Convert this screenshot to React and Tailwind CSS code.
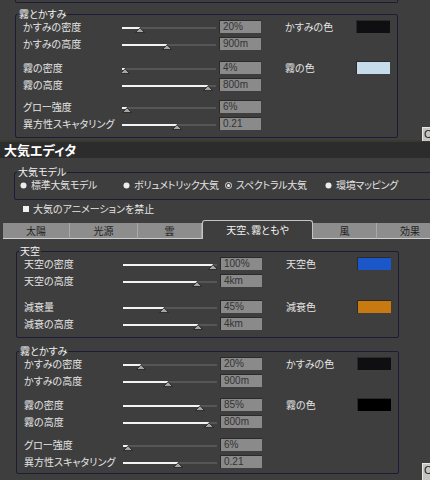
import React from 'react';

const topFog = [
  { label: 'かすみの密度', pos: 18, value: '20%', colorLabel: 'かすみの色', sw: 'bg-[#0f0f12]' },
  { label: 'かすみの高度', pos: 45, value: '900m', mt: 'mt-[4px]' },
  { label: '霧の密度', pos: 3, value: '4%', colorLabel: '霧の色', sw: 'bg-[#c7dcea]', mt: 'mt-[11px]' },
  { label: '霧の高度', pos: 86, value: '800m', mt: 'mt-[4px]' },
  { label: 'グロー強度', pos: 5, value: '6%', mt: 'mt-[9px]' },
  { label: '異方性スキャタリング', pos: 55, value: '0.21', mt: 'mt-[4px]' },
];

const sky = [
  { label: '天空の密度', pos: 90, value: '100%', colorLabel: '天空色', sw: 'bg-[#1b57c9]' },
  { label: '天空の高度', pos: 74, value: '4km', mt: 'mt-[4px]' },
  { label: '減衰量', pos: 41, value: '45%', colorLabel: '減衰色', sw: 'bg-[#c8790f]', mt: 'mt-[13px]' },
  { label: '減衰の高度', pos: 75, value: '4km', mt: 'mt-[4px]' },
];

const fog = [
  { label: 'かすみの密度', pos: 18, value: '20%', colorLabel: 'かすみの色', sw: 'bg-[#0f0f12]' },
  { label: 'かすみの高度', pos: 45, value: '900m', mt: 'mt-[4px]' },
  { label: '霧の密度', pos: 77, value: '85%', colorLabel: '霧の色', sw: 'bg-[#000000]', mt: 'mt-[11px]' },
  { label: '霧の高度', pos: 86, value: '800m', mt: 'mt-[4px]' },
  { label: 'グロー強度', pos: 5, value: '6%', mt: 'mt-[10px]' },
  { label: '異方性スキャタリング', pos: 55, value: '0.21', mt: 'mt-[4px]' },
];

const tabs = [
  { name: '太陽', w: 'w-[67px]' },
  { name: '光源', w: 'w-[68px]' },
  { name: '雲', w: 'w-[64px]' },
  { name: '天空、霧ともや', w: 'w-[111px]', active: true },
  { name: '風', w: 'w-[64px]' },
  { name: '効果', w: 'w-[67px]' },
];

const models = [
  { name: '標準大気モデル', w: 'w-[103px]' },
  { name: 'ボリュメトリック大気', w: 'w-[102px]' },
  { name: 'スペクトラル大気', w: 'w-[100px]', checked: true },
  { name: '環境マッピング', w: 'w-[100px]' },
];

function Slider({ pos }) {
  return (
    <svg width="94" height="13" viewBox="0 0 94 13" className="block shrink-0">
      <rect x="0" y="7.5" width="94" height="1" fill="#6e6e6e" />
      <rect x="0" y="7" width={pos} height="2" fill="#f3f3f3" />
      <polygon
        points={`${pos - 4.5},12.5 ${pos},7.8 ${pos + 4.5},12.5`}
        fill="#a6a6a6"
        stroke="#1e1e1e"
        strokeWidth="0.8"
      />
    </svg>
  );
}

function Row({ label, pos, value, colorLabel, sw, mt = '' }) {
  return (
    <div className={`flex items-center h-[13px] ${mt}`}>
      <span className="w-[99px] shrink-0 whitespace-nowrap leading-[13px]">{label}</span>
      <Slider pos={pos} />
      <div className="ml-[3px] w-[42px] h-[13px] shrink-0 bg-[#8a8a8a] border-t border-l border-[#2a2a2a] pl-[3px] font-['Liberation_Sans',sans-serif] text-[10px] leading-[12px] text-[#333333]">
        {value}
      </div>
      <span className="ml-[24px] w-[71px] shrink-0 whitespace-nowrap leading-[13px]">{colorLabel}</span>
      {sw ? <div className={`w-[34px] h-[13px] shrink-0 border-t border-l border-[#2a2a2a] ${sw}`} /> : <div className="w-[34px]" />}
    </div>
  );
}

function GroupBox({ title, rows, className = '', pb = 'pb-[7px]' }) {
  return (
    <fieldset className={`border border-[#1c1c36] rounded-[2px] p-0 min-w-0 ${className}`}>
      <legend className="ml-[2px] px-[1px] leading-[12px] text-[#f0f0f0]">{title}</legend>
      <div className={`px-[7px] ${pb}`}>
        {rows.map((r) => (
          <Row key={r.label} {...r} />
        ))}
      </div>
    </fieldset>
  );
}

function Radio({ checked }) {
  return (
    <svg width="7" height="7" viewBox="0 0 7 7" className="block shrink-0">
      {checked ? (
        <>
          <circle cx="3.5" cy="3.5" r="3.1" fill="none" stroke="#e8e8e8" strokeWidth="0.9" />
          <circle cx="3.5" cy="3.5" r="1.5" fill="#f2f2f2" />
        </>
      ) : (
        <circle cx="3.5" cy="3.5" r="3" fill="#ececec" />
      )}
    </svg>
  );
}

function SideButton({ className = '', h = 'h-[14px]' }) {
  return (
    <div className={`w-[40px] ${h} bg-[#c4c4c4] border-t border-l border-[#e6e6e6] pl-[1px] font-['Liberation_Sans',sans-serif] text-[11px] leading-[13px] text-[#222] ${className}`}>
      Close
    </div>
  );
}

export default function App() {
  return (
    <div className="w-[430px] h-[480px] overflow-hidden bg-[#3e3e3e] font-['Noto_Sans_CJK_JP',sans-serif] [font-feature-settings:'palt'] text-[10px] text-[#e4e4e4]">
      <div className="w-[470px]">
        {/* 前のパネル（霧とかすみ） */}
        <div className="flex h-[140px]">
          <div className="w-[422px] shrink-0">
            <div className="ml-[15px] w-[383px] h-[3px] border-x border-b border-[#1c1c36] rounded-b-[2px]" />
            <GroupBox title="霧とかすみ" rows={topFog} className="ml-[15px] mt-[5px] w-[383px]" />
          </div>
          <div className="flex flex-col justify-end">
            <SideButton className="mb-[-1px]" />
          </div>
        </div>
        <div className="h-[2px] bg-[#39392e]" />

        {/* タイトル */}
        <div className="h-[16px] bg-[#2c2c2c] pl-[4px] text-[13px] leading-[16px] font-bold text-white">
          大気エディタ
        </div>

        {/* 大気モデル */}
        <fieldset className="ml-[14px] mt-[8px] border border-[#1c1c36] rounded-[2px] p-0 min-w-0">
          <legend className="ml-[2px] px-[1px] leading-[12px] text-[#f0f0f0]">大気モデル</legend>
          <div className="flex items-center h-[14px] pl-[5px] mb-[7px]">
            {models.map((m) => (
              <div key={m.name} className={`flex items-center gap-[4px] shrink-0 ${m.w}`}>
                <Radio checked={m.checked} />
                <span className="whitespace-nowrap leading-[14px] tracking-[-0.3px]">{m.name}</span>
              </div>
            ))}
          </div>
        </fieldset>

        <div className="flex items-center h-[12px] mt-[3px] pl-[23px] gap-[4px]">
          <div className="w-[6px] h-[6px] bg-[#f0f0f0]" />
          <span className="leading-[12px]">大気のアニメーションを禁止</span>
        </div>

        {/* タブ */}
        <div className="flex items-end h-[19px] mt-[5px] pl-[3px]">
          {tabs.map((t) =>
            t.active ? (
              <div
                key={t.name}
                className={`${t.w} h-[19px] shrink-0 border-t border-x border-[#c4c4c4] rounded-t-[3px] text-center leading-[17px] text-[#f2f2f2]`}
              >
                {t.name}
              </div>
            ) : (
              <div
                key={t.name}
                className={`${t.w} h-[16px] shrink-0 bg-[#8d8d8d] border-r border-[#a9a9a9] border-b-[1px] border-b-[#cfcfcf] text-center leading-[15px] text-[#1f1f1f]`}
              >
                {t.name}
              </div>
            )
          )}
        </div>

        {/* 天空・霧 */}
        <div className="flex">
          <div className="w-[422px] shrink-0 pt-[6px]">
            <GroupBox title="天空" rows={sky} className="ml-[16px] w-[383px]" />
            <GroupBox title="霧とかすみ" rows={fog} pb="pb-[5px]" className="ml-[16px] mt-[7px] mb-[6px] w-[383px]" />
          </div>
          <div className="flex flex-col justify-end">
            <SideButton h="h-[17px]" />
          </div>
        </div>
      </div>
    </div>
  );
}
